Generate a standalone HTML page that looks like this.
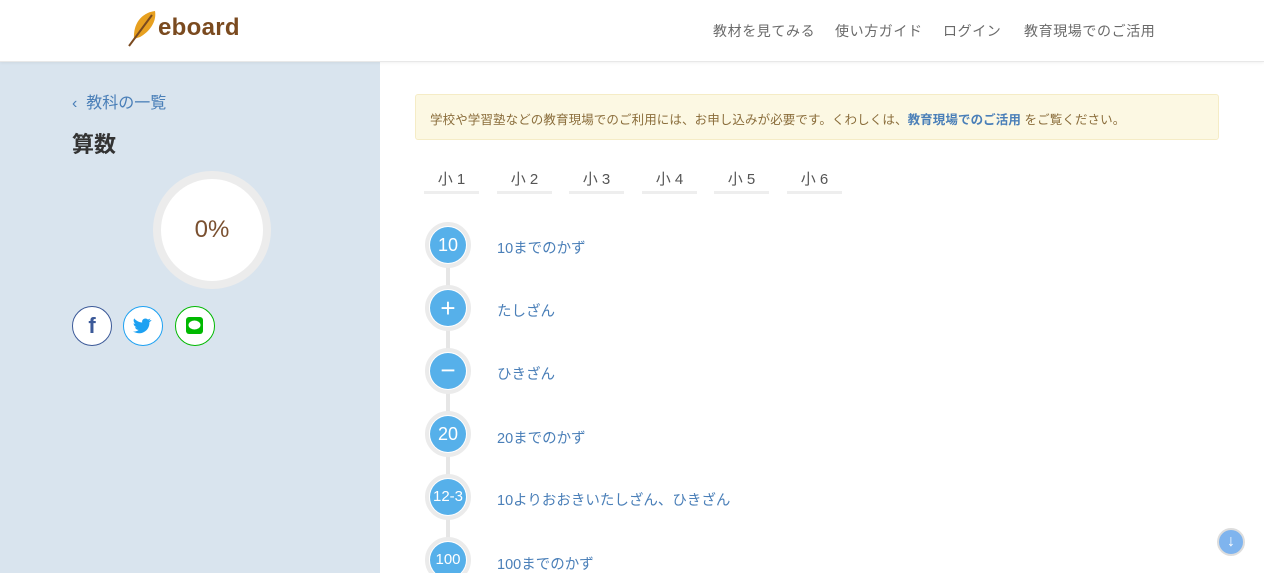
<!DOCTYPE html>
<html><head><meta charset="utf-8"><style>
*{margin:0;padding:0;box-sizing:border-box}
html,body{width:1264px;height:573px;overflow:hidden}
body{background:#fff;font-family:"Liberation Sans","Noto Sans CJK JP",sans-serif;position:relative}
.hdr{position:absolute;left:0;top:0;width:1264px;height:62px;background:#fff;border-bottom:1px solid #e8e8e8;box-shadow:0 1px 3px rgba(0,0,0,.06);z-index:2}
.logo{position:absolute;left:127px;top:10px;width:120px;height:40px}
.logo span{position:absolute;left:31px;top:4px;font-size:24px;font-weight:bold;color:#7a4a1f;letter-spacing:.3px}
.nav{position:absolute;top:21px;font-size:14px;color:#6a6a6a;letter-spacing:.6px}
.side{position:absolute;left:0;top:62px;width:380px;height:511px;background:#d9e4ee}
.back{position:absolute;left:72px;top:89px;font-size:16px;color:#4a7fb8}
h1{position:absolute;left:72px;top:127px;font-size:22px;color:#333;font-weight:bold}
.ring{position:absolute;left:153px;top:171px;width:118px;height:118px;border-radius:50%;background:#fff;border:8px solid #ececec;text-align:center;line-height:102px;font-size:24px;color:#7a5030}
.sns{position:absolute;top:306px;width:40px;height:40px;border-radius:50%;background:#fff;border:1.5px solid}
.notice{position:absolute;left:415px;top:94px;width:804px;height:46px;background:#fcf8e3;border:1px solid #f5ecc6;border-radius:3px;font-size:12.5px;color:#8a6d3b;padding:14px 14px;letter-spacing:.1px;white-space:nowrap}
.notice b{color:#4a7fb8}
.tab{position:absolute;top:168px;width:55px;height:26px;border-bottom:3px solid #eee;text-align:center;font-size:15px;color:#555}
.line{position:absolute;left:446px;top:250px;width:4px;height:320px;background:#e6e6e6}
.it{position:absolute;left:425px;width:46px;height:46px;border-radius:50%;background:#fff;border:4px solid #ebebeb}
.it div{position:absolute;left:1px;top:1px;width:36px;height:36px;border-radius:50%;background:#56b0ea;color:#fff;text-align:center;line-height:36px;font-size:18px}
.lb{position:absolute;left:497px;font-size:14.5px;color:#4a7fb8}
</style></head><body>
<div class="hdr">
 <div class="logo"><svg width="34" height="38" viewBox="0 0 34 38"><path d="M28 1C14 3 6 14 7 29L13 27C22 22 30 12 28 1Z" fill="#e7a020"/><path d="M25 5L2 36" stroke="#7a4a1f" stroke-width="2"/></svg><span>eboard</span></div>
 <div class="nav" style="left:713px">教材を見てみる</div>
 <div class="nav" style="left:835px">使い方ガイド</div>
 <div class="nav" style="left:943px">ログイン</div>
 <div class="nav" style="left:1024px">教育現場でのご活用</div>
</div>
<div class="side"></div>
<div class="back">‹&nbsp; 教科の一覧</div>
<h1>算数</h1>
<div class="ring">0%</div>
<div class="sns" style="left:72px;border-color:#3b5998;color:#3b5998;text-align:center;line-height:38px;font-size:22px;font-weight:bold">f</div>
<div class="sns" style="left:123px;border-color:#1da1f2"><svg width="37" height="37" viewBox="0 0 37 37"><path d="M27 13c-.8.4-1.5.5-2.3.6.8-.5 1.4-1.2 1.7-2.1-.8.4-1.6.8-2.5 1-1.6-1.7-4.5-1.3-5.5.8-.3.6-.4 1.4-.2 2.2-3.3-.2-6.1-1.7-8-4.1-1.1 1.8-.5 4.100 1.2 5.3-.6 0-1.2-.2-1.8-.5 0 1.900 1.3 3.5 3.2 3.900-.6.2-1.2.2-1.8.1.5 1.6 2 2.7 3.7 2.700-1.6 1.3-3.6 1.9-5.6 1.6 7.5 4.6 16.7-.5 16.3-9.3.9-.6 1.6-1.3 2.2-2.2z" fill="#1da1f2"/></svg></div>
<div class="sns" style="left:175px;border-color:#00b900"><svg width="37" height="37" viewBox="0 0 37 37"><rect x="10" y="10" width="17" height="17" rx="3" fill="#00b900"/><ellipse cx="18.5" cy="18" rx="6" ry="4.5" fill="#fff"/></svg></div>
<div class="notice">学校や学習塾などの教育現場でのご利用には、お申し込みが必要です。くわしくは、<b>教育現場でのご活用</b> をご覧ください。</div>
<div class="tab" style="left:424px">小 1</div>
<div class="tab" style="left:497px">小 2</div>
<div class="tab" style="left:569px">小 3</div>
<div class="tab" style="left:642px">小 4</div>
<div class="tab" style="left:714px">小 5</div>
<div class="tab" style="left:787px">小 6</div>
<div class="line"></div>
<div class="it" style="top:222px"><div>10</div></div><div class="lb" style="top:237px">10までのかず</div>
<div class="it" style="top:285px"><div style="font-size:26px">+</div></div><div class="lb" style="top:300px">たしざん</div>
<div class="it" style="top:348px"><div style="font-size:26px;line-height:34px">−</div></div><div class="lb" style="top:363px">ひきざん</div>
<div class="it" style="top:411px"><div>20</div></div><div class="lb" style="top:427px">20までのかず</div>
<div class="it" style="top:474px"><div style="font-size:15px">12-3</div></div><div class="lb" style="top:489px">10よりおおきいたしざん、ひきざん</div>
<div class="it" style="top:537px"><div style="font-size:15px">100</div></div><div class="lb" style="top:553px">100までのかず</div>
<div style="position:absolute;left:1217px;top:528px;width:28px;height:28px;border-radius:50%;background:#7fb4ee;border:2px solid #ddd;color:#fff;text-align:center;line-height:24px;font-size:16px;font-weight:bold">↓</div>
</body></html>
